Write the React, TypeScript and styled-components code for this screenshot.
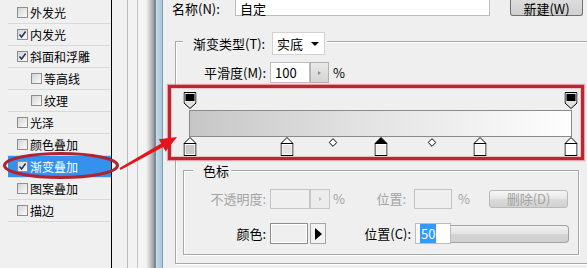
import React from "react";
import styled, { createGlobalStyle } from "styled-components";

const Global = createGlobalStyle`
  html, body { margin: 0; padding: 0; background: #efefef; }
  body { font-family: "Noto Sans CJK SC", "Liberation Sans", sans-serif; }
`;

const Page = styled.div`
  position: relative;
  display: flex;
  width: 587px;
  height: 268px;
  overflow: hidden;
  background: #efefef;
  color: #000;
  font-family: "Noto Sans CJK SC", "Liberation Sans", sans-serif;
`;

/* ---------- left style list ---------- */
const StyleList = styled.div`
  flex: 0 0 112px;
  box-sizing: border-box;
  border-right: 1px solid #000;
  padding: 2px 0 0 8px;
  background: #f0f0f0;
`;

const StyleRow = styled.div<{ $indent?: boolean; $selected?: boolean }>`
  display: flex;
  align-items: center;
  gap: 2px;
  height: 21px;
  border-bottom: 1px solid #d9d9d9;
  padding-left: ${(p) => (p.$indent ? 23 : 9)}px;
  background: ${(p) => (p.$selected ? "#3590ee" : "transparent")};
  color: ${(p) => (p.$selected ? "#fff" : "#000")};
  font-size: 12px;
  line-height: 14px;
  white-space: nowrap;
`;

const CheckBox = styled.span`
  flex: 0 0 auto;
  box-sizing: border-box;
  width: 11px;
  height: 11px;
  border: 1px solid #8d8d8d;
  background: linear-gradient(135deg, #d4d4d4, #fbfbfb);
  display: flex;
  align-items: center;
  justify-content: center;
`;

/* ---------- gutter / window frame ---------- */
const Gutter = styled.div`
  flex: 0 0 43px;
  background: linear-gradient(
    to right,
    #f0f0f0 0 15px,
    #bcbcbc 15px 16px,
    #f2f2f2 16px 25px,
    #c4c4c4 25px 26px,
    #f4f4f4 26px 34px,
    #d6d6d6 37px,
    #9a9a9a 42px,
    #6f6f6f 43px
  );
`;

const WindowFrame = styled.div`
  flex: 0 0 8px;
  box-sizing: border-box;
  border-left: 1px solid #6d8ea6;
  border-right: 1px solid #7f9db3;
  background: linear-gradient(to right, #c6dcea, #a9c6da);
`;

/* ---------- dialog ---------- */
const Dialog = styled.div`
  flex: 0 0 437px;
  display: flex;
  flex-direction: column;
  background: #efefef;
  font-size: 13px;
`;

const NameRow = styled.div`
  display: flex;
  align-items: flex-start;
  height: 16px;
  padding-left: 9px;
`;

const NameLabel = styled.span`
  width: 63px;
  padding-top: 2px;
  line-height: 14px;
  white-space: nowrap;
`;

const TextField = styled.div<{ $w: number; $h: number; $disabled?: boolean }>`
  box-sizing: border-box;
  flex: 0 0 auto;
  width: ${(p) => p.$w}px;
  height: ${(p) => p.$h}px;
  background: ${(p) => (p.$disabled ? "#efefef" : "#fff")};
  border: 1px solid ${(p) => (p.$disabled ? "#c4c4c4" : "#bcbcbc")};
  padding-left: 4px;
  line-height: ${(p) => p.$h - 2}px;
  white-space: nowrap;
`;

const NameField = styled(TextField)`
  border-top: none;
  padding-top: 2px;
  line-height: 13px;
`;

const PushButton = styled.div<{ $w: number; $disabled?: boolean }>`
  box-sizing: border-box;
  flex: 0 0 auto;
  width: ${(p) => p.$w}px;
  height: 18px;
  border: 1px solid ${(p) => (p.$disabled ? "#b9b9b9" : "#707070")};
  border-radius: 3px;
  background: linear-gradient(#f6f6f6, #e6e6e6 50%, #dadada 51%, #d2d2d2);
  color: ${(p) => (p.$disabled ? "#a3a3a3" : "#000")};
  text-align: center;
  line-height: 16px;
  white-space: nowrap;
`;

const NewButton = styled(PushButton)`
  height: 16px;
  margin-left: 20px;
  border-top: none;
  border-radius: 0 0 3px 3px;
  background: linear-gradient(#dcdcdc, #d0d0d0);
  padding-top: 2px;
  line-height: 13px;
`;

const GroupBox = styled.div<{ $ml: number; $mt: number; $w: number; $pb: number }>`
  box-sizing: border-box;
  width: ${(p) => p.$w}px;
  margin: ${(p) => p.$mt}px 0 0 ${(p) => p.$ml}px;
  padding-bottom: ${(p) => p.$pb}px;
  border: 1px solid #a8a8a8;
  box-shadow: inset 1px 1px 0 #fff, 1px 1px 0 #fff;
  display: flex;
  flex-direction: column;
`;

const Legend = styled.div<{ $ml: number; $mt: number; $h: number }>`
  display: flex;
  align-items: center;
  gap: 4px;
  width: fit-content;
  height: ${(p) => p.$h}px;
  margin: ${(p) => p.$mt}px 0 0 ${(p) => p.$ml}px;
  padding: 0 2px 0 10px;
  background: #efefef;
  white-space: nowrap;
`;

const LegendLabel = styled.span`
  width: 75px;
  line-height: 23px;
`;

const Select = styled.div`
  box-sizing: border-box;
  width: 53px;
  height: 23px;
  background: #fff;
  border: 1px solid #d2d2d2;
  display: flex;
  align-items: center;
  justify-content: space-between;
  padding: 0 5px 0 4px;
`;

const DownArrow = styled.span`
  width: 0;
  height: 0;
  border-left: 4px solid transparent;
  border-right: 4px solid transparent;
  border-top: 4px solid #000;
`;

const FormRow = styled.div<{ $mt: number }>`
  display: flex;
  align-items: center;
  height: 21px;
  margin-top: ${(p) => p.$mt}px;
  white-space: nowrap;
`;

const FieldLabel = styled.span<{ $w: number; $mr: number; $disabled?: boolean }>`
  flex: 0 0 auto;
  width: ${(p) => p.$w}px;
  margin-right: ${(p) => p.$mr}px;
  text-align: right;
  color: ${(p) => (p.$disabled ? "#a3a3a3" : "#000")};
`;

const Unit = styled.span<{ $ml: number; $w: number; $disabled?: boolean }>`
  flex: 0 0 auto;
  width: ${(p) => p.$w}px;
  margin-left: ${(p) => p.$ml}px;
  color: ${(p) => (p.$disabled ? "#a3a3a3" : "#000")};
`;

const Spinner = styled.div<{ $w: number; $h: number; $disabled?: boolean }>`
  box-sizing: border-box;
  flex: 0 0 auto;
  width: ${(p) => p.$w}px;
  height: ${(p) => p.$h}px;
  border: 1px solid ${(p) => (p.$disabled ? "#c6c6c6" : "#b2b2b2")};
  background: ${(p) =>
    p.$disabled ? "#ececec" : "linear-gradient(#e9e9e9, #d4d4d4)"};
  display: flex;
  align-items: center;
  justify-content: center;
`;

const SmallRight = styled.span<{ $disabled?: boolean }>`
  width: 0;
  height: 0;
  border-top: 2px solid transparent;
  border-bottom: 2px solid transparent;
  border-left: 3px solid ${(p) => (p.$disabled ? "#c0c0c0" : "#8a8a8a")};
`;

const Swatch = styled.div`
  box-sizing: border-box;
  flex: 0 0 auto;
  width: 38px;
  height: 21px;
  border: 1px solid #8e8e8e;
  box-shadow: inset 0 0 0 1px #fff;
  background: #efefef;
`;

const ArrowButton = styled.div`
  box-sizing: border-box;
  flex: 0 0 auto;
  width: 16px;
  height: 21px;
  margin-left: 2px;
  border: 1px solid #a6a6a6;
  background: #f2f2f2;
  display: flex;
  align-items: center;
  justify-content: center;
`;

const BigRight = styled.span`
  width: 0;
  height: 0;
  border-top: 6px solid transparent;
  border-bottom: 6px solid transparent;
  border-left: 7px solid #000;
`;

const Highlight = styled.span`
  background: #3399ff;
  color: #fff;
  padding: 0 1px;
`;

const Slider = styled.div`
  box-sizing: border-box;
  flex: 0 0 auto;
  width: 118px;
  height: 18px;
  border: 1px solid #a2a2a2;
  border-left: none;
  border-radius: 0 4px 4px 0;
  background: linear-gradient(#f2f2f2, #e2e2e2 50%, #d4d4d4 51%, #cfcfcf);
`;

/* ---------- gradient editor (red highlighted) ---------- */
const GradientEditor = styled.div`
  margin: 2px 8px 0 -8px;
  border: 3px solid #bd2630;
  box-shadow: 0 0 1px 1px rgba(214, 110, 118, 0.6), inset 0 0 1px 1px rgba(230, 150, 156, 0.5);
  padding: 4px 9px 0 18px;
  background: #efefef;
  display: flex;
  flex-direction: column;
`;

const StopTrack = styled.div<{ $h: number }>`
  position: relative;
  height: ${(p) => p.$h}px;
  margin: 0 1px;
`;

const StopMark = styled.div<{ $top: number }>`
  position: absolute;
  top: ${(p) => p.$top}px;
  transform: translateX(-50%);
  display: flex;
`;

const GradientBar = styled.div`
  box-sizing: border-box;
  height: 27px;
  border: 1px solid #8a8a8a;
  background: linear-gradient(to right, #c6c6c6, #e2e2e2 45%, #fefefe);
`;

const Overlay = styled.svg`
  position: absolute;
  left: 0;
  top: 0;
  pointer-events: none;
`;

/* ---------- data ---------- */
const styles = [
  { name: "外发光", checked: false },
  { name: "内发光", checked: true },
  { name: "斜面和浮雕", checked: true },
  { name: "等高线", checked: false, indent: true },
  { name: "纹理", checked: false, indent: true },
  { name: "光泽", checked: false },
  { name: "颜色叠加", checked: false },
  { name: "渐变叠加", checked: true, selected: true },
  { name: "图案叠加", checked: false },
  { name: "描边", checked: false },
];

const opacityStops = [0, 100];
const colorStops = [
  { pos: 0, fill: "#c9c9c9" },
  { pos: 25.5, fill: "#e4e4e4" },
  { pos: 50, fill: "#eeeeee", selected: true },
  { pos: 76, fill: "#f4f4f4" },
  { pos: 100, fill: "#ffffff" },
];
const midpoints = [37.6, 63.5];

const Tick = () => (
  <svg width="9" height="9" viewBox="0 0 9 9">
    <path d="M1.5 4.5 L3.6 7 L7.6 1.6" fill="none" stroke="#24355e" strokeWidth="1.6" />
  </svg>
);

const TopStop = () => (
  <svg width="13" height="17" viewBox="0 0 13 17">
    <path d="M0.5 0.5 H12.5 V11 L6.5 16.5 L0.5 11 Z" fill="#e2e2e2" stroke="#000" />
    <rect x="2" y="2" width="9" height="7" fill="#000" />
  </svg>
);

const BottomStop = ({ fill, selected }: { fill: string; selected?: boolean }) => (
  <svg width="13" height="19" viewBox="0 0 13 19">
    <path d="M6.5 0.5 L12.5 6.5 H0.5 Z" fill={selected ? "#000" : "#fff"} stroke="#000" />
    <rect x="0.5" y="6.5" width="12" height="12" fill="#fff" stroke="#000" />
    <rect x="2" y="8" width="9" height="9" fill={fill} />
  </svg>
);

const Diamond = () => (
  <svg width="9" height="9" viewBox="0 0 9 9">
    <path d="M4.5 0.7 L8.3 4.5 L4.5 8.3 L0.7 4.5 Z" fill="#fff" stroke="#000" />
  </svg>
);

export default function App() {
  return (
    <Page>
      <Global />
      <StyleList>
        {styles.map((s) => (
          <StyleRow key={s.name} $indent={s.indent} $selected={s.selected}>
            <CheckBox>{s.checked && <Tick />}</CheckBox>
            <span>{s.name}</span>
          </StyleRow>
        ))}
      </StyleList>
      <Gutter />
      <WindowFrame />
      <Dialog>
        <NameRow>
          <NameLabel>名称(N):</NameLabel>
          <NameField $w={255} $h={16}>自定</NameField>
          <NewButton $w={73}>新建(W)</NewButton>
        </NameRow>

        <GroupBox $ml={12} $mt={25} $w={418} $pb={8}>
          <Legend $ml={7} $mt={-10} $h={23}>
            <LegendLabel>渐变类型(T):</LegendLabel>
            <Select>
              <span>实底</span>
              <DownArrow />
            </Select>
          </Legend>

          <FormRow $mt={7}>
            <FieldLabel $w={90} $mr={4}>平滑度(M):</FieldLabel>
            <TextField $w={40} $h={21}>100</TextField>
            <Spinner $w={19} $h={21}>
              <SmallRight />
            </Spinner>
            <Unit $ml={4} $w={20}>%</Unit>
          </FormRow>

          <GradientEditor>
            <StopTrack $h={18}>
              {opacityStops.map((p) => (
                <StopMark key={p} $top={0} style={{ left: `${p}%` }}>
                  <TopStop />
                </StopMark>
              ))}
            </StopTrack>
            <GradientBar />
            <StopTrack $h={20}>
              {colorStops.map((c) => (
                <StopMark key={c.pos} $top={0} style={{ left: `${c.pos}%` }}>
                  <BottomStop fill={c.fill} selected={c.selected} />
                </StopMark>
              ))}
              {midpoints.map((m) => (
                <StopMark key={m} $top={1} style={{ left: `${m}%` }}>
                  <Diamond />
                </StopMark>
              ))}
            </StopTrack>
          </GradientEditor>

          <GroupBox $ml={7} $mt={10} $w={396} $pb={10}>
            <Legend $ml={9} $mt={-9} $h={16}>
              <span>色标</span>
            </Legend>
            <FormRow $mt={10}>
              <FieldLabel $w={82} $mr={4} $disabled>不透明度:</FieldLabel>
              <TextField $w={40} $h={20} $disabled />
              <Spinner $w={20} $h={20} $disabled>
                <SmallRight $disabled />
              </Spinner>
              <Unit $ml={3} $w={20} $disabled>%</Unit>
              <FieldLabel $w={53} $mr={8} $disabled>位置:</FieldLabel>
              <TextField $w={38} $h={20} $disabled />
              <Unit $ml={6} $w={25} $disabled>%</Unit>
              <PushButton $w={79} $disabled style={{ marginLeft: 6 }}>删除(D)</PushButton>
            </FormRow>
            <FormRow $mt={14}>
              <FieldLabel $w={82} $mr={4}>颜色:</FieldLabel>
              <Swatch />
              <ArrowButton>
                <BigRight />
              </ArrowButton>
              <FieldLabel $w={85} $mr={4}>位置(C):</FieldLabel>
              <TextField $w={36} $h={21}>
                <Highlight>50</Highlight>
              </TextField>
              <Slider />
            </FormRow>
          </GroupBox>
        </GroupBox>
      </Dialog>

      <Overlay width="587" height="268" viewBox="0 0 587 268">
        <ellipse cx="61" cy="165.5" rx="56.5" ry="12" fill="none" stroke="#ad2530" strokeWidth="3" />
        <polygon
          points="119.5,168.1 161.2,143.6 158.8,139.2 177,137 165.6,151.4 163.2,147 120.5,169.9"
          fill="#e4141d"
        />
      </Overlay>
    </Page>
  );
}
